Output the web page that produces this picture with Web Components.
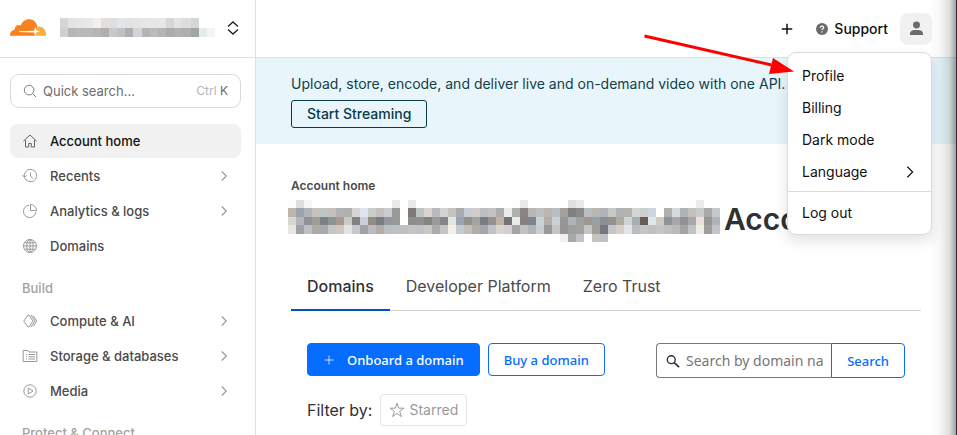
<!DOCTYPE html>
<html lang="en">
<head>
<meta charset="utf-8">
<title>Account home</title>
<style>
    html, body{
        margin: 0;
        height: 100%;
        overflow: hidden;
        background: white;
        font-family: Inter, "Liberation Sans", sans-serif;
        font-size: 14px;
        color: #313131;
    }
</style>
</head>
<body>
<dash-layout>
    <side-bar slot="side">
        <nav-item icon="home" active>Account home</nav-item>
        <nav-item icon="recent" more>Recents</nav-item>
        <nav-item icon="pie" more>Analytics &amp; logs</nav-item>
        <nav-item icon="globe">Domains</nav-item>
        <nav-heading>Build</nav-heading>
        <nav-item icon="compute" more>Compute &amp; AI</nav-item>
        <nav-item icon="storage" more>Storage &amp; databases</nav-item>
        <nav-item icon="media" more>Media</nav-item>
        <nav-heading>Protect &amp; Connect</nav-heading>
    </side-bar>
    <top-bar>
        <user-menu>
            <menu-entry>Profile</menu-entry>
            <menu-entry>Billing</menu-entry>
            <menu-entry>Dark mode</menu-entry>
            <menu-entry more>Language</menu-entry>
            <menu-entry separated>Log out</menu-entry>
        </user-menu>
    </top-bar>
    <promo-banner action="Start Streaming">Upload, store, encode, and deliver live and on-demand video with one API.</promo-banner>
    <account-page></account-page>
</dash-layout>

<script>
const icons = {
    home: '<path d="M1.5 8 8 2l6.500 6M3.500 7v7h3.200v-3.500h2.600V14h3.200V7"/>',
    recent: '<path d="M2.600 9.500A6.200 6.200 0 1 0 3.300 4.200Q2 6 2.300 9M.5 7l1.900 2.300L4.500 7.500M8.500 4.500V8l2.500 2.700"/>',
    pie: '<path d="M7 2.200A6.200 6.200 0 1 0 13.800 9"/><path d="M8.500 1.500v6h6a6 6 0 0 0-6-6z"/>',
    globe: '<circle cx="8" cy="8" r="6.500"/><ellipse cx="8" cy="8" rx="3.200" ry="6.500"/><path d="M8 1.500v13M1.500 8h13M2.500 4.800h11M2.500 11.200h11"/>',
    compute: '<path d="M6 2 1.800 8 6 14M6 2h1l4 6-4 6H6M9 2l4 6-4 6M11.200 2.600 14.700 8l-3.500 5.400"/>',
    storage: '<path d="M1.200 2.500h4.500L7 4h7.800v9.500H1.200zM4 6.500h1M6.500 6.500H13M4 8.800h1M6.500 8.800H13M4 11h1M6.500 11H13"/>',
    media: '<circle cx="8" cy="8" r="6.200"/><path d="m6.300 5 4.700 3-4.700 3z"/>',
    search: '<circle cx="7" cy="7" r="5.500"/><path d="m11 11 4 4"/>',
    lens: '<circle cx="6" cy="6.500" r="4.500"/><path stroke-width="2" d="m9.300 9.800 5.700 5.200"/>',
    chevron: '<path d="m5 2 6 6-6 6"/>',
    updown: '<path d="M3 6.500 8 2l5 4.500M3 9.500 8 14l5-4.500"/>',
    plus: '<path d="M8 2v12M2 8h12"/>',
    star: '<path d="m8 1.200 1.700 5h5.200l-4.200 3.200 1.600 5.100L8 11.400l-4.300 3.100 1.600-5.100L1.100 6.200h5.200z"/>',
    user: '<path fill="currentColor" stroke="none" d="M8 .5a3.700 3.700 0 1 0 0 7.400A3.700 3.700 0 0 0 8 .5zM1 15v-1c0-3 2.500-4.500 4.500-4.500h5C12.500 9.500 15 11 15 14v1z"/>',
    help: '<circle cx="8" cy="8" r="8" fill="currentColor" stroke="none"/><path stroke="white" stroke-width="1.600" d="M5.700 6.200C5.800 3.400 10.300 3.500 10.300 6.200c0 1.500-2.300 1.600-2.300 3.200M8 11v1.700"/>'
};

// every element goes through here so that markup and style sit together
function define(name, html, setup){
    const template = document.createElement('template');
    template.innerHTML = html;
    customElements.define(name, class extends HTMLElement {
        constructor() {
            super();
            this.attachShadow({mode: 'open'}).appendChild(template.content.cloneNode(true));
        }
        connectedCallback(){
            if(setup) setup(this, this.shadowRoot);
        }
    });
}

define('ui-icon', `
<style>
    :host{
        display: inline-flex;
        flex: none;
        width: var(--size, 16px);
        height: var(--size, 16px);
    }
    svg{
        width: 100%;
        height: 100%;
        fill: none;
        stroke: currentColor;
        stroke-width: var(--stroke, 1);
    }
</style>
<svg viewBox="0 0 16 16" aria-hidden="true"></svg>
`, (el, root) => {
    root.querySelector('svg').innerHTML = icons[el.getAttribute('name')];
});

// redacted names: one rect for each cell, rows given as lists of hex colours, "-" is empty
const mosaics = {
    company: [
        'd6d6d6 e2e3e5 e6e6e6 e8e8e7 f1f1f1 e5dfda dedfe1 e2e6e9 e2e2e2 e4e4e4 e6e6e6 e7e7e7 e7e7e7 d6d6d6 e3e3e3 dcdddc d4d5d7 - -',
        'd3cfc8 b6b6b6 b9b9b9 b9b9b9 b5b5b5 b0aeae c7c9cb c0c2c0 adafb1 d0d5dc b5b4b0 b8bbbf b5b4b2 adabaa b0b1b2 b0adab 9fa5a9 e8eaea f4f4f4'
    ],
    account: [
        'fcfcfc dedede f6f7f9 - - - - - - - - - - e8e8ea - e9e9ea - - - - - - - - - - - - fdfdfc e9e9eb - - - - - e1e1e1 e8e9eb - - - - - - - - - - - - - fdfdfd ebebed - -',
        'bfb5aa 9ca3ab b0b3b8 c8c2bc bfc5c6 c6c0bb b0b3b6 b0b0ad d6d6d4 e1e6ee cbcccc c4bfba c8ccd0 999999 fffefc 807878 bdc4c4 d9d5cf b9bac0 d2d2d2 c6c4c2 aaabad c9ccd2 d2cdc9 bbbfc1 c5c3c1 abadae ececec aeb1ad 8a8486 b9b7b5 bbc1c3 bdb5af bbbec1 a5a09c 808080 8a8a88 bbbdc2 bab6b2 afb4b9 c6c8c3 b0b1b2 b4b3af d5d6d8 cfcfcf d0d4dc fffefd b0b0b0 d6dadd b0b3b3 c4c1bb cacaca a9a9a8 c3c9cf',
        'd9d6d1 b3b6ba 8f9397 a09d99 7b8184 8f9394 a99a90 cacac7 828282 c7d0d9 928b80 787f83 94989a 979999 fffefc 8e8e8e 8f8f8f 85857f 9c9a98 86868a e5e4de 9ba4ae 929290 a3a39f 797d81 929292 bfb4aa 747477 e8ebe9 89817e 7e838d ccd3d4 b2aeac ccd2d4 999594 acb3ba a0a0a0 9f978b 96a0a7 8e8f90 929292 b1aaa3 d2d2d2 a7adb4 665d5b e0e7ed d2c9bf 8e9499 a7a7a7 929292 a8a8a8 ebe1da 969696 afb3ba',
        'e9e5e0 a0a1a2 bdc1c7 b0aaa6 a7abb0 c5c5c5 cec8c3 e3e3e1 c7c8ca a0a2a5 b9bbc0 b4aca7 bcc0c3 bdc1c3 c0c0c2 c4c4c5 c1c1c3 cbc8c4 adabad c5c5c7 f0efe8 c3cad2 bfbfbe b1aca7 a3a6aa c1c2c3 dad4cf d2cfce a3a6a4 c0c2c5 b4b4b2 c9ced0 9a9796 c5c5c7 999493 9e9e9e a2a2a2 c3c5c7 a39d98 74777b c4c5c8 d5cfca e4e4e4 babdc0 c5c5c5 bfc0c2 c6c5c7 bdbfc0 b8bbbd a4a4a5 c1c2c4 f0ece6 9f9e9d c1c5cb',
        '- - - - - - - - - - - - - - - - - - - - - - - - - - - - - - - - - - f0f0ef a8a8a8 c0c3c7 - c6c2be bdc2c7 - - - - - - - - - - - - - -'
    ]
};

define('redacted-name', `
<style>
    :host{
        display: inline-flex;
    }
    svg{
        width: 100%;
        height: 100%;
    }
</style>
<svg preserveAspectRatio="none" shape-rendering="crispEdges" aria-hidden="true"></svg>
`, (el, root) => {
    const rows = mosaics[el.getAttribute('kind')].map(row => row.split(' '));
    const svg = root.querySelector('svg');
    svg.setAttribute('viewBox', `0 0 ${rows[0].length} ${rows.length}`);
    svg.innerHTML = rows.map((row, y) => row.map((color, x) =>
        color == '-' ? '' : `<rect x="${x}" y="${y}" width="1" height="1" fill="#${color}"/>`
    ).join('')).join('');
});

define('dash-layout', `
<style>
    :host{
        display: grid;
        grid-template-columns: 256px 1fr;
        height: 100%;
        overflow: hidden;
    }
    main{
        min-width: 0;
    }
    .edge{
        position: fixed;
        top: 0;
        right: 0;
        bottom: 0;
        width: 28px;
        box-sizing: border-box;
        border-right: 1px solid #272b3a;
        background: linear-gradient(to right, transparent, rgba(0,0,0,.03) 40%, rgba(0,0,0,.13) 75%, rgba(0,0,0,.36));
        pointer-events: none;
        z-index: 5;
    }
</style>
<slot name="side"></slot>
<main><slot></slot></main>
<div class="edge"></div>
`);

define('side-bar', `
<style>
    :host{
        display: block;
        box-sizing: border-box;
        border-right: 1px solid #e0e0e0;
        overflow: hidden;
    }
    header{
        display: flex;
        align-items: center;
        box-sizing: border-box;
        height: 58px;
        padding: 0 14px 2px 10px;
        border-bottom: 1px solid #e0e0e0;
    }
    .logo{
        width: 36px;
        height: 17px;
        margin-right: 14px;
    }
    redacted-name{
        width: 155px;
        height: 19px;
    }
    header button{
        display: flex;
        margin-left: auto;
        padding: 0;
        border: none;
        background: none;
        color: #222;
        --stroke: 1.400;
    }
    .search{
        display: flex;
        align-items: center;
        gap: 6px;
        box-sizing: border-box;
        height: 34px;
        margin: 16px 14px 16px 10px;
        padding: 0 12px;
        border: 1px solid #d9d9d9;
        border-radius: 9px;
        color: #6d6d6d;
        --size: 14px;
    }
    input{
        flex: 1;
        min-width: 0;
        padding: 0;
        border: none;
        outline: 0;
        background: none;
        font: 13px/18px Inter, sans-serif;
    }
    input::placeholder{
        color: #6d6d6d;
        opacity: 1;
    }
    kbd{
        font: 12px/18px Inter, sans-serif;
        color: #b5b5b5;
    }
    kbd b{
        font-weight: 400;
        color: #666;
    }
    nav{
        display: flex;
        flex-direction: column;
        gap: 1px;
        padding: 0 14px 0 10px;
    }
</style>
<header>
    <svg class="logo" viewBox="0 0 36 17" aria-label="Cloudflare">
        <path fill="#fbad41" d="M25 16.700V8.500l3.300-1C32.500 7.300 36 10.700 36 15.200q0 .8-.3 1.500z"/>
        <path fill="#f6821f" d="M0 16.700C-.3 13.500 1.800 11 4.700 10.800 4.300 7.500 7.500 4.700 10.700 6.500 12.300 2.500 15.300.3 19 .3c4 0 7.300 2.700 8.200 6.500l-1.500 5.500-1 4.400z"/>
        <path fill="white" d="m9 12.200 15-.5 1.200-3.900 1.200 3.700 3.400 1-3.400 1-1.200 3-1-3L9 12.900z"/>
    </svg>
    <redacted-name kind="company"></redacted-name>
    <button aria-label="Switch account"><ui-icon name="updown"></ui-icon></button>
</header>
<label class="search">
    <ui-icon name="search"></ui-icon>
    <input type="text" placeholder="Quick search..." aria-label="Quick search">
    <kbd>Ctrl <b>K</b></kbd>
</label>
<nav><slot></slot></nav>
`);

define('nav-item', `
<style>
    :host{
        display: block;
        color: #4a4a4a;
    }
    a{
        display: flex;
        align-items: center;
        gap: 12px;
        height: 34px;
        padding: 0 11px 0 12px;
        border-radius: 8px;
        color: inherit;
        text-decoration: none;
        font-size: 13px;
        font-weight: 500;
    }
    :host([active]){
        color: #111;
    }
    :host([active]) a{
        background: #f1f1f1;
    }
    ui-icon{
        color: #999;
    }
    :host([active]) ui-icon{
        color: #666;
    }
    .more{
        display: none;
        margin-left: auto;
        --size: 12px;
        --stroke: 1.600;
    }
    :host([more]) .more{
        display: inline-flex;
    }
</style>
<a href="#"><ui-icon class="icon"></ui-icon><slot></slot><ui-icon class="more" name="chevron"></ui-icon></a>
`, (el, root) => {
    root.querySelector('.icon').shadowRoot.querySelector('svg').innerHTML = icons[el.getAttribute('icon')];
});

define('nav-heading', `
<style>
    :host{
        display: block;
        padding: 15px 12px 6px;
        font-size: 13px;
        font-weight: 500;
        line-height: 18px;
        color: #a3a3a3;
    }
</style>
<slot></slot>
`);

define('top-bar', `
<style>
    :host{
        display: flex;
        align-items: center;
        justify-content: flex-end;
        box-sizing: border-box;
        height: 58px;
        padding-right: 25px;
        border-bottom: 1px solid #e0e0e0;
    }
    button{
        display: flex;
        align-items: center;
        gap: 6px;
        padding: 0;
        border: none;
        background: none;
        font: 500 14px/20px Inter, sans-serif;
        color: #111;
    }
    .add{
        margin-right: 22px;
        --size: 14px;
        --stroke: 1.700;
    }
    .support{
        margin-right: 12px;
    }
    .support ui-icon{
        --size: 12px;
        color: #6b6b6b;
    }
</style>
<button class="add" aria-label="Add"><ui-icon name="plus"></ui-icon></button>
<button class="support"><ui-icon name="help"></ui-icon>Support</button>
<slot></slot>
`);

define('user-menu', `
<style>
    :host{
        display: block;
        position: relative;
        z-index: 2;
    }
    .avatar{
        display: grid;
        place-items: center;
        width: 32px;
        height: 32px;
        padding: 0;
        border: none;
        border-radius: 8px;
        background: #f1f1f1;
        color: #6b6b6b;
    }
    .avatar ui-icon{
        --size: 15px;
    }
    .menu{
        position: absolute;
        top: calc(100% + 7px);
        right: 0;
        box-sizing: border-box;
        width: 145px;
        padding: 7px 0 5px;
        border: 1px solid #dcdcdc;
        border-radius: 9px;
        background: white;
        box-shadow: 0 6px 14px rgba(0,0,0,.12);
    }
    .pointer{
        position: absolute;
        top: -20px;
        right: calc(100% - 6px);
        width: 150px;
        height: 42px;
        pointer-events: none;
    }
</style>
<button class="avatar" aria-label="Account"><ui-icon name="user"></ui-icon></button>
<div class="menu">
    <slot></slot>
    <svg class="pointer" viewBox="0 0 150 42" aria-hidden="true">
        <path stroke="red" stroke-width="3" d="m.5 3 127 29"/>
        <path fill="red" d="m129 25 21 13.500-25 2.500z"/>
    </svg>
</div>
`);

define('menu-entry', `
<style>
    :host{
        display: block;
    }
    :host([separated]){
        margin-top: 3px;
        padding-top: 5px;
        border-top: 1px solid #dcdcdc;
    }
    button{
        display: flex;
        align-items: center;
        justify-content: space-between;
        width: 100%;
        height: 32px;
        padding: 0 14px;
        border: none;
        background: none;
        font: 14px/20px Inter, sans-serif;
        color: #111;
    }
    ui-icon{
        display: none;
        --size: 14px;
        --stroke: 1.400;
    }
    :host([more]) ui-icon{
        display: inline-flex;
    }
</style>
<button><slot></slot><ui-icon name="chevron"></ui-icon></button>
`);

define('promo-banner', `
<style>
    :host{
        display: block;
        box-sizing: border-box;
        padding: 16px 35px;
        background: #e8f6fb;
        color: #123f4d;
    }
    p{
        margin: 0 0 6px;
        line-height: 20px;
    }
    button{
        box-sizing: border-box;
        height: 28px;
        padding: 0 15px;
        border: 1px solid #0b3948;
        border-radius: 3px;
        background: none;
        font: 500 14px/20px Inter, sans-serif;
        color: #0b3948;
        vertical-align: top;
    }
</style>
<p><slot></slot></p>
<button></button>
`, (el, root) => {
    root.querySelector('button').textContent = el.getAttribute('action');
});

define('tab-bar', `
<style>
    :host{
        display: flex;
        border-bottom: 1px solid #d5d5d5;
    }
    button{
        height: 48px;
        margin-bottom: -1px;
        padding: 0 16px;
        border: none;
        border-bottom: 2px solid transparent;
        background: none;
        font: 16px/24px Inter, sans-serif;
        color: #4a4a4a;
    }
    button[aria-selected=true]{
        border-color: #0051c3;
        font-weight: 500;
        color: #313131;
    }
</style>
<button role="tab" aria-selected="true">Domains</button>
<button role="tab">Developer Platform</button>
<button role="tab">Zero Trust</button>
`);

define('domain-tools', `
<style>
    :host{
        display: block;
        padding: 32px 16px;
        --ui: "Noto Sans", sans-serif;
    }
    .row{
        display: flex;
        align-items: flex-start;
        gap: 8px;
    }
    button{
        display: flex;
        align-items: center;
        box-sizing: border-box;
        height: 33px;
        padding: 0 15px;
        border: 1px solid #056dff;
        border-radius: 4px;
        background: white;
        font: 500 13px/20px var(--ui);
        color: #056dff;
        white-space: nowrap;
    }
    .primary{
        gap: 12px;
        background: #056dff;
        color: white;
        --size: 12px;
    }
    form{
        display: flex;
        width: 249px;
        margin-left: auto;
    }
    form label{
        display: flex;
        flex: 1;
        align-items: center;
        gap: 6px;
        min-width: 0;
        padding: 0 8px 0 9px;
        border: 1px solid #797979;
        border-right: none;
        border-radius: 4px 0 0 4px;
        --size: 14px;
        --stroke: 1.600;
    }
    input{
        flex: 1;
        min-width: 0;
        padding: 0;
        border: none;
        outline: 0;
        font: 14px/20px var(--ui);
    }
    input::placeholder{
        color: #767676;
        opacity: 1;
    }
    form button{
        height: 35px;
        border-radius: 0 4px 4px 0;
    }
    .filter{
        align-items: center;
        margin-top: 16px;
        font-size: 16px;
    }
    .filter button{
        gap: 4px;
        height: 32px;
        padding: 0 8px;
        border-color: #e5e5e5;
        font: 14px/20px Inter, sans-serif;
        color: #999;
    }
</style>
<div class="row">
    <button class="primary"><ui-icon name="plus"></ui-icon>Onboard a domain</button>
    <button>Buy a domain</button>
    <form>
        <label><ui-icon name="lens"></ui-icon><input type="text" placeholder="Search by domain name" aria-label="Search by domain name"></label>
        <button type="button">Search</button>
    </form>
</div>
<div class="row filter">Filter by: <button><ui-icon name="star"></ui-icon>Starred</button></div>
`);

define('account-page', `
<style>
    :host{
        display: block;
        padding: 33px 36px 0 35px;
    }
    .crumb{
        margin: 0;
        font-size: 12px;
        font-weight: 600;
        line-height: 18px;
        color: #4a4a4a;
    }
    h1{
        display: flex;
        align-items: center;
        gap: 4px;
        height: 42px;
        margin: 5px 0 21px -3px;
        font-size: 30px;
        font-weight: 600;
        line-height: 38px;
        white-space: nowrap;
    }
    h1 span{
        padding-bottom: 4px;
    }
    redacted-name{
        width: 432px;
        height: 42px;
    }
</style>
<p class="crumb">Account home</p>
<h1><redacted-name kind="account"></redacted-name><span>Account</span></h1>
<tab-bar role="tablist"></tab-bar>
<domain-tools></domain-tools>
`);
</script>
</body>
</html>
